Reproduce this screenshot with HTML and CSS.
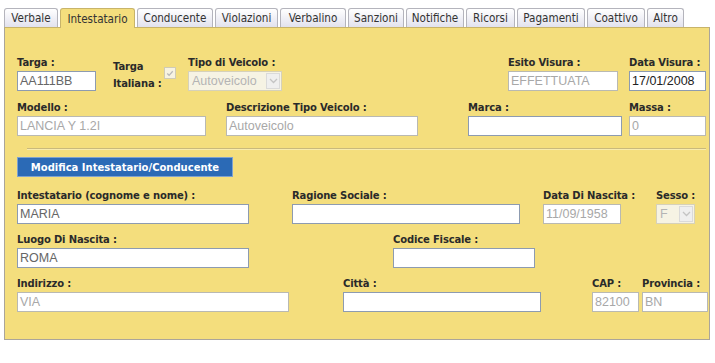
FILE: index.html
```html
<!DOCTYPE html>
<html lang="it">
<head>
  <meta charset="UTF-8">
  <title>Verbale - Intestatario</title>
  <link rel="stylesheet" href="styles.css">
</head>
<body>

<div class="wrap">
  <!-- Tabs -->
  <div class="tabs">
    <div class="tab t-verbale">Verbale</div>
    <div class="tab t-intest active">Intestatario</div>
    <div class="tab t-cond">Conducente</div>
    <div class="tab t-viol">Violazioni</div>
    <div class="tab t-vbl">Verbalino</div>
    <div class="tab t-sanz">Sanzioni</div>
    <div class="tab t-notif">Notifiche</div>
    <div class="tab t-ric">Ricorsi</div>
    <div class="tab t-pag">Pagamenti</div>
    <div class="tab t-coat">Coattivo</div>
    <div class="tab t-altro">Altro</div>
  </div>

  <!-- Panel -->
  <div class="panel">
    <div class="row row-1">
      <div class="field f-targa">
        <label>Targa :</label>
        <div class="inp">AA111BB</div>
      </div>
      <div class="field f-italiana">
        <div class="lbl-2">Targa<br>Italiana :</div>
        <span class="chk">
          <svg width="11" height="11" viewBox="0 0 11 11"><path d="M2.5 5.5 L4.5 7.5 L8.5 3" fill="none" stroke="#b9b9b9" stroke-width="1.4"/></svg>
        </span>
      </div>
      <div class="field f-tipo">
        <label>Tipo di Veicolo :</label>
        <div class="sel off">
          <span>Autoveicolo</span>
          <span class="arrow"><svg width="9" height="6" viewBox="0 0 9 6"><path d="M1 1 L4.5 4.5 L8 1" fill="none" stroke="#c4c4c4" stroke-width="1.3"/></svg></span>
        </div>
      </div>
      <div class="field f-esito">
        <label>Esito Visura :</label>
        <div class="inp off">EFFETTUATA</div>
      </div>
      <div class="field f-data">
        <label>Data Visura :</label>
        <div class="inp dark">17/01/2008</div>
      </div>
    </div>

    <div class="row row-2">
      <div class="field f-modello">
        <label>Modello :</label>
        <div class="inp off">LANCIA Y 1.2I</div>
      </div>
      <div class="field f-descr">
        <label>Descrizione Tipo Veicolo :</label>
        <div class="inp off">Autoveicolo</div>
      </div>
      <div class="field f-marca">
        <label>Marca :</label>
        <div class="inp"></div>
      </div>
      <div class="field f-massa">
        <label>Massa :</label>
        <div class="inp off">0</div>
      </div>
    </div>

    <div class="sep"></div>

    <button class="btn">Modifica Intestatario/Conducente</button>

    <div class="row row-3">
      <div class="field f-intest">
        <label>Intestatario (cognome e nome) :</label>
        <div class="inp">MARIA</div>
      </div>
      <div class="field f-ragione">
        <label>Ragione Sociale :</label>
        <div class="inp"></div>
      </div>
      <div class="field f-nascita">
        <label>Data Di Nascita :</label>
        <div class="inp off">11/09/1958</div>
      </div>
      <div class="field f-sesso">
        <label>Sesso :</label>
        <div class="sel off">
          <span>F</span>
          <span class="arrow"><svg width="9" height="6" viewBox="0 0 9 6"><path d="M1 1 L4.5 4.5 L8 1" fill="none" stroke="#c4c4c4" stroke-width="1.3"/></svg></span>
        </div>
      </div>
    </div>

    <div class="row row-4">
      <div class="field f-luogo">
        <label>Luogo Di Nascita :</label>
        <div class="inp">ROMA</div>
      </div>
      <div class="field f-cf">
        <label>Codice Fiscale :</label>
        <div class="inp"></div>
      </div>
    </div>

    <div class="row row-5">
      <div class="field f-indirizzo">
        <label>Indirizzo :</label>
        <div class="inp off">VIA</div>
      </div>
      <div class="field f-citta">
        <label>Città :</label>
        <div class="inp"></div>
      </div>
      <div class="field f-cap">
        <label>CAP :</label>
        <div class="inp off">82100</div>
      </div>
      <div class="field f-prov">
        <label>Provincia :</label>
        <div class="inp off">BN</div>
      </div>
    </div>
  </div>
</div>

</body>
</html>
```

FILE: styles.css
```css
* {
  box-sizing: border-box;
}

body {
  margin: 0;
  background: #fff;
  font-family: "DejaVu Sans", Verdana, sans-serif;
}

.wrap {
  width: 706px;
  margin-left: 4px;
  padding-top: 7px;
}

/* Tabs */
.tabs {
  display: flex;
  align-items: flex-end;
  height: 20px;
}

.tab {
  height: 19px;
  margin-right: 2px;
  padding-top: 2px;
  text-align: center;
  font-family: "DejaVu Sans Condensed", "DejaVu Sans", sans-serif;
  font-size: 11.6px;
  color: #333;
  background: linear-gradient(#ffffff, #e2e2ee);
  border: 1px solid #b4b4bc;
  border-bottom: none;
  border-radius: 3px 3px 0 0;
  white-space: nowrap;
}

.tab.active {
  height: 20px;
  padding-top: 3px;
  background: #f4de7d;
  border-color: #c8b46a;
  position: relative;
  top: 1px;
}

.t-verbale { width: 54px; }
.t-intest  { width: 75px; }
.t-cond    { width: 76px; }
.t-viol    { width: 63px; }
.t-vbl     { width: 66px; }
.t-sanz    { width: 56px; }
.t-notif   { width: 58px; }
.t-ric     { width: 49px; }
.t-pag     { width: 68px; }
.t-coat    { width: 58px; }
.t-altro   { width: 37px; }

/* Panel */
.panel {
  height: 313px;
  background: #f4de7d;
  border: 1px solid #aaa59a;
  border-top-color: #c8b46a;
  padding: 28px 0 0 12px;
}

.row {
  display: flex;
  align-items: flex-start;
}

.row-2, .row-4, .row-5 {
  margin-top: 9px;
}

.row-3 {
  margin-top: 12px;
}

.field label {
  display: block;
  height: 14px;
  line-height: 14px;
  margin-bottom: 1px;
  font-size: 10px;
  font-weight: bold;
  color: #2a2a2a;
  white-space: nowrap;
  letter-spacing: -0.15px;
}

.inp {
  height: 20px;
  line-height: 18px;
  padding-left: 2px;
  background: #fff;
  border: 1px solid #8d9bb0;
  font-family: "Liberation Sans", Arial, sans-serif;
  font-size: 12.5px;
  color: #666;
  white-space: nowrap;
  overflow: hidden;
}

.inp.dark {
  color: #222;
}

.inp.off {
  color: #a8a8a8;
  border-color: #b9b9b2;
}

.sel {
  display: flex;
  justify-content: space-between;
  align-items: center;
  height: 20px;
  padding: 0 1px 0 3px;
  background: #f6f3e4;
  border: 1px solid #d6d1ba;
  font-family: "Liberation Sans", Arial, sans-serif;
  font-size: 12.5px;
  color: #b4b4b4;
}

.sel .arrow {
  display: flex;
  align-items: center;
  justify-content: center;
  width: 14px;
  height: 16px;
  background: #efefef;
  border: 1px solid #dadada;
}

/* Field positions */
.f-targa     { width: 79px; }
.f-italiana  { width: 64px; margin-left: 17px; display: flex; align-items: flex-start; }
.f-tipo      { width: 94px; margin-left: 11px; }
.f-esito     { width: 110px; margin-left: 226px; }
.f-data      { width: 77px; margin-left: 11px; }

.f-modello   { width: 189px; }
.f-descr     { width: 192px; margin-left: 20px; }
.f-marca     { width: 154px; margin-left: 50px; }
.f-massa     { width: 77px; margin-left: 7px; }

.f-intest    { width: 232px; }
.f-ragione   { width: 228px; margin-left: 43px; }
.f-nascita   { width: 78px; margin-left: 23px; }
.f-sesso     { width: 39px; margin-left: 35px; }

.f-luogo     { width: 232px; }
.f-cf        { width: 142px; margin-left: 144px; }

.f-indirizzo { width: 272px; }
.f-citta     { width: 198px; margin-left: 54px; }
.f-cap       { width: 47px; margin-left: 51px; }
.f-prov      { width: 66px; margin-left: 3px; }

.lbl-2 {
  margin-top: 2px;
  font-size: 10px;
  font-weight: bold;
  line-height: 17px;
  color: #2a2a2a;
  white-space: nowrap;
  letter-spacing: -0.15px;
}

.chk {
  display: flex;
  align-items: center;
  justify-content: center;
  flex-shrink: 0;
  width: 12px;
  height: 12px;
  margin: 11px 0 0 2px;
  background: #f7f3e2;
  border: 1px solid #d0cbb5;
}

.sep {
  margin: 12px 0 0 10px;
  width: 679px;
  border-top: 1px solid #c9b97c;
  border-bottom: 1px solid #f9ecae;
}

.btn {
  display: block;
  margin-top: 7px;
  width: 216px;
  height: 20px;
  padding: 0;
  background: #2b6ab6;
  border: 1px solid #7fa2cf;
  color: #fff;
  font-family: "DejaVu Sans", Verdana, sans-serif;
  font-size: 10px;
  font-weight: bold;
}
```
